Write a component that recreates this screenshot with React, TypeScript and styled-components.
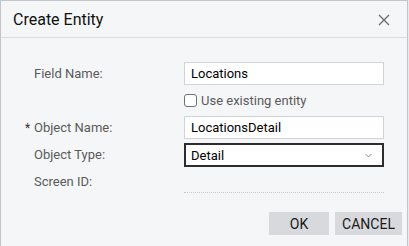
import React from 'react';
import styled, { createGlobalStyle } from 'styled-components';

const GlobalStyle = createGlobalStyle`
  html, body {
    margin: 0;
    padding: 0;
    background: #e9eaec;
  }
  body {
    font-family: Roboto, 'Liberation Sans', Arial, sans-serif;
  }
`

const Dialog = styled.div`
  width: 408px;
  height: 246px;
  box-sizing: border-box;
  background: #f5f6f8;
  border: 1px solid #c3c4c7;
  border-bottom: none;
  display: flex;
  flex-direction: column;
`

const Header = styled.div`
  height: 35px;
  display: flex;
  align-items: center;
  justify-content: space-between;
  padding: 1px 17px 0 12px;
  border-bottom: 1px solid #dcdde0;
`

const Title = styled.div`
  font-size: 16px;
  color: #111;
`

const CloseButton = styled.button`
  border: none;
  background: none;
  padding: 0;
  width: 12px;
  height: 12px;
  display: flex;
  cursor: pointer;
`

const Body = styled.div`
  display: grid;
  grid-template-columns: 150px 200px;
  grid-auto-rows: 23px;
  row-gap: 4px;
  padding: 24px 0 0 33px;
`

const Label = styled.div<{ $required?: boolean }>`
  display: flex;
  align-items: center;
  font-size: 13px;
  color: #5a5a5a;
  margin-left: ${p => (p.$required ? '-9px' : '0')};
`

const Star = styled.span`
  width: 9px;
  font-size: 12px;
  color: #333;
`

const Input = styled.div<{ $select?: boolean }>`
  box-sizing: border-box;
  height: ${p => (p.$select ? '24px' : '23px')};
  background: #fff;
  border: ${p => (p.$select ? '2px solid #2d2d2d' : '1px solid #d2d3d6')};
  display: flex;
  align-items: center;
  justify-content: space-between;
  padding: ${p => (p.$select ? '0 10px 0 5px' : '0 6px')};
  font-size: 13px;
  color: #000;
`

const Empty = styled.div`
  border-bottom: 1px dotted #c9cacd;
`

const CheckRow = styled.label`
  grid-column: 2;
  display: flex;
  align-items: center;
  gap: 4px;
  font-size: 13px;
  color: #5a5a5a;
`

const Box = styled.span`
  width: 13px;
  height: 13px;
  box-sizing: border-box;
  border: 1px solid #707070;
  border-radius: 3px;
  background: #fff;
`

const Footer = styled.div`
  display: flex;
  justify-content: flex-end;
  gap: 6px;
  padding: 19px 5px 0 0;
`

const Button = styled.button<{ $w: number }>`
  width: ${p => p.$w}px;
  height: 23px;
  border: none;
  background: #d8d9dc;
  font-family: Roboto, 'Liberation Sans', Arial, sans-serif;
  font-size: 14px;
  color: #1a1a1a;
  padding: 0;
`

const App: React.FC = () => {
  return (
    <>
      <GlobalStyle />
      <Dialog>
        <Header>
          <Title>Create Entity</Title>
          <CloseButton>
            <svg width="12" height="12" viewBox="0 0 12 12">
              <path d="M1 1L11 11M11 1L1 11" stroke="#6b6b6b" strokeWidth="1.3" />
            </svg>
          </CloseButton>
        </Header>
        <Body>
          <Label>Field Name:</Label>
          <Input>Locations</Input>

          <CheckRow>
            <Box />
            Use existing entity
          </CheckRow>

          <Label $required><Star>*</Star>Object Name:</Label>
          <Input>LocationsDetail</Input>

          <Label>Object Type:</Label>
          <Input $select>
            Detail
            <svg width="7" height="5" viewBox="0 0 7 5">
              <path d="M0.5 1L3.5 4L6.5 1" stroke="#8a8a8a" strokeWidth="1" fill="none" />
            </svg>
          </Input>

          <Label>Screen ID:</Label>
          <Empty />
        </Body>
        <Footer>
          <Button $w={60}>OK</Button>
          <Button $w={67}>CANCEL</Button>
        </Footer>
      </Dialog>
    </>
  )
}

export default App
